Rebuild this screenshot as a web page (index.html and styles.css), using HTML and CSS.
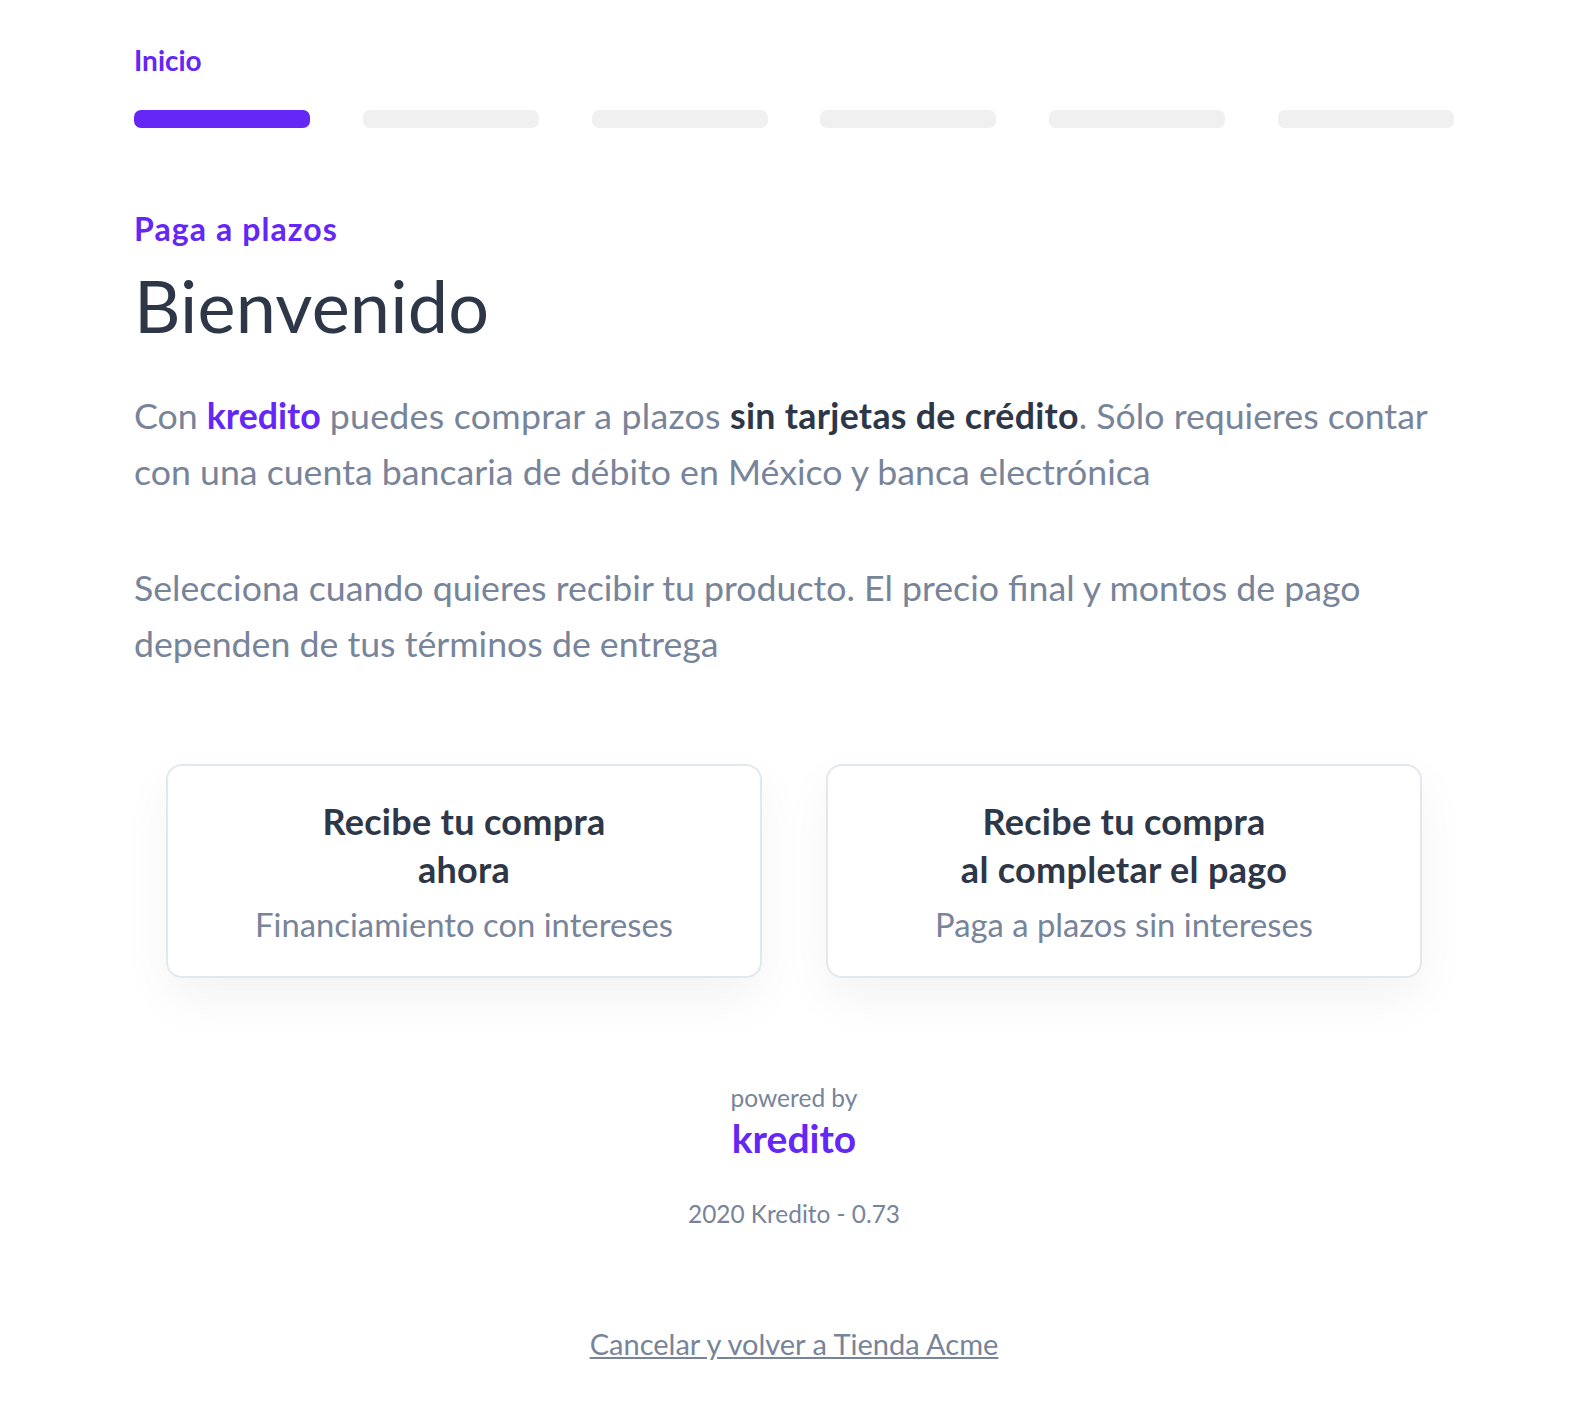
FILE: index.html
```html
<!DOCTYPE html>
<html lang="es">
<head>
    <meta charset="UTF-8">
    <meta name="viewport" content="width=device-width, initial-scale=1.0">
    <title>Kredito</title>
    <link rel="stylesheet" href="styles.css">
</head>
<body>
    <div class="page">
        <div class="step-name">Inicio</div>
        <div class="steps">
            <div class="step active"></div>
            <div class="step"></div>
            <div class="step"></div>
            <div class="step"></div>
            <div class="step"></div>
            <div class="step"></div>
        </div>
        <div class="eyebrow">Paga a plazos</div>
        <h1>Bienvenido</h1>
        <p class="lead">Con <b class="brand">kredito</b> <span class="spaced">puedes comprar a plazos</span> <b>sin tarjetas de crédito</b>. Sólo requieres contar con una cuenta bancaria de débito en México y banca electrónica</p>
        <p class="lead second">Selecciona cuando quieres recibir tu producto. El precio final y montos de pago dependen de tus términos de entrega</p>
        <div class="options">
            <div class="card">
                <h2>Recibe tu compra<br>ahora</h2>
                <div class="card-sub">Financiamiento con intereses</div>
            </div>
            <div class="card">
                <h2>Recibe tu compra<br>al completar el pago</h2>
                <div class="card-sub">Paga a plazos sin intereses</div>
            </div>
        </div>
        <div class="footer">
            <div class="powered">powered by</div>
            <div class="logo">kredito</div>
            <div class="version">2020 Kredito - 0.73</div>
            <a class="cancel" href="#">Cancelar y volver a Tienda Acme</a>
        </div>
    </div>
</body>
</html>
```

FILE: styles.css
```css
body {
    margin: 0;
    background-color: #fff;
    font-family: "Lato", "Noto Sans", sans-serif;
    color: #77849a;
}
.page {
    width: 1320px;
    margin-left: 134px;
    padding-top: 43px;
}
.step-name {
    font-size: 28px;
    line-height: 34px;
    font-weight: 700;
    color: #6427f5;
}
.steps {
    display: flex;
    justify-content: space-between;
    margin-top: 33px;
}
.step {
    width: 176px;
    height: 18px;
    border-radius: 7px;
    background-color: #f0f0f0;
}
.step.active {
    background-color: #6427f5;
}
.eyebrow {
    margin-top: 81px;
    font-size: 32px;
    line-height: 40px;
    font-weight: 700;
    letter-spacing: 1.1px;
    color: #6427f5;
}
h1 {
    margin: 16px 0 0;
    font-size: 72px;
    line-height: 80px;
    font-weight: 400;
    letter-spacing: 0.2px;
    color: #2d3748;
}
.lead {
    margin: 43px 0 0;
    font-size: 35.7px;
    line-height: 56px;
}
.lead.second {
    margin-top: 60px;
}
.lead b {
    font-weight: 700;
    letter-spacing: 0.3px;
    color: #2d3748;
}
.lead b.brand {
    letter-spacing: 0;
    color: #6427f5;
}
.spaced {
    letter-spacing: 0.27px;
}
.options {
    display: flex;
    gap: 64px;
    margin: 92px 32px 0;
}
.card {
    box-sizing: border-box;
    flex: 1;
    height: 214px;
    padding-top: 31px;
    border: 2px solid #e2e8f0;
    border-radius: 16px;
    background-color: #fff;
    box-shadow: 0 20px 50px rgba(0, 0, 0, 0.05);
    text-align: center;
}
.card h2 {
    margin: 0;
    font-size: 36px;
    line-height: 48px;
    font-weight: 700;
    letter-spacing: 0.3px;
    color: #2d3748;
}
.card-sub {
    margin-top: 8px;
    font-size: 32.8px;
    line-height: 48px;
}
.footer {
    display: flex;
    flex-direction: column;
    align-items: center;
    margin-top: 104px;
}
.powered {
    font-size: 24.5px;
    line-height: 32px;
}
.logo {
    font-size: 39px;
    line-height: 48px;
    font-weight: 700;
    color: #6427f5;
}
.version {
    margin-top: 36px;
    font-size: 24.4px;
    line-height: 32px;
}
.cancel {
    margin-top: 94px;
    font-size: 29px;
    line-height: 40px;
    color: #77849a;
}
```
